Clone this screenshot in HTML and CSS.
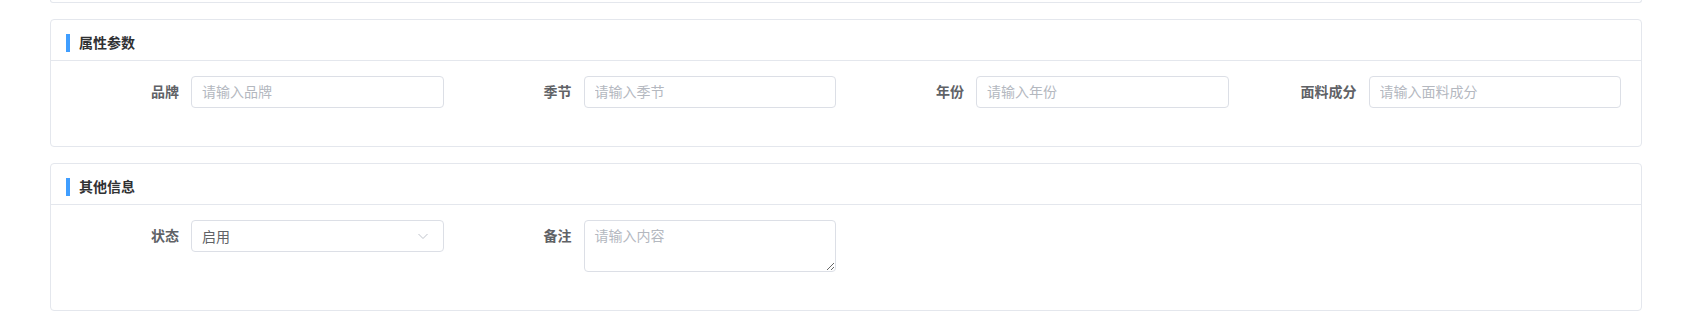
FILE: index.html
```html
<!DOCTYPE html>
<html>
<head>
<meta charset="utf-8">
<title>goods-edit</title>
<link rel="stylesheet" href="styles.css">
</head>
<body>
  <div class="page">
    <div class="card card-prev"></div>

    <div class="card">
      <div class="card-header"><span class="card-title">属性参数</span></div>
      <div class="card-body">
        <div class="form-row">
          <div class="form-item">
            <label class="form-label">品牌</label>
            <input class="form-input" type="text" placeholder="请输入品牌">
          </div>
          <div class="form-item">
            <label class="form-label">季节</label>
            <input class="form-input" type="text" placeholder="请输入季节">
          </div>
          <div class="form-item">
            <label class="form-label">年份</label>
            <input class="form-input" type="text" placeholder="请输入年份">
          </div>
          <div class="form-item">
            <label class="form-label">面料成分</label>
            <input class="form-input" type="text" placeholder="请输入面料成分">
          </div>
        </div>
      </div>
    </div>

    <div class="card">
      <div class="card-header"><span class="card-title">其他信息</span></div>
      <div class="card-body">
        <div class="form-row">
          <div class="form-item">
            <label class="form-label">状态</label>
            <div class="form-select">
              <input class="form-input" type="text" value="启用" readonly>
              <svg class="select-arrow" width="12" height="12" viewBox="0 0 12 12"><path d="M1.5 4l4.5 4.5 4.5-4.5" fill="none" stroke="#c0c4cc" stroke-width="1"/></svg>
            </div>
          </div>
          <div class="form-item">
            <label class="form-label">备注</label>
            <textarea class="form-textarea" placeholder="请输入内容"></textarea>
          </div>
        </div>
      </div>
    </div>
  </div>
</body>
</html>
```

FILE: styles.css
```css
body { margin: 0; background: #ffffff; font-family: "Liberation Sans", "Noto Sans CJK SC", sans-serif; font-size: 14px; color: #606266; }
.page { padding: 0 42px 0 50px; }

.card { border: 1px solid #e4e7ed; border-radius: 4px; background: #fff; margin-bottom: 16px; }
.card-prev { height: 2px; border-top: none; border-radius: 0 0 4px 4px; }

.card-header { padding: 14px 15px 8px; border-bottom: 1px solid #e4e7ed; height: 18px; }
.card-title { display: block; border-left: 4px solid #409eff; padding-left: 9px; height: 18px; line-height: 19px; font-size: 14px; font-weight: bold; color: #303133; }

.card-body { padding: 15px 20px 16px; }
.form-row { display: grid; grid-template-columns: repeat(4, 1fr); margin: 0 -10px; }
.form-item { display: flex; align-items: flex-start; padding: 0 10px; margin-bottom: 22px; }
.form-label { width: 120px; flex: none; box-sizing: border-box; padding-right: 12px; text-align: right; line-height: 32px; font-weight: bold; color: #606266; }

.form-input { flex: 1; min-width: 0; width: 100%; box-sizing: border-box; height: 32px; padding: 0 10px; border: 1px solid #dcdfe6; border-radius: 4px; font-family: inherit; font-size: 14px; color: #606266; outline: none; }
.form-input::placeholder, .form-textarea::placeholder { color: #b4b8bf; }

.form-select { flex: 1; min-width: 0; position: relative; display: flex; }
.form-select .form-input { cursor: pointer; }
.select-arrow { position: absolute; right: 15px; top: 10px; }

.form-textarea { flex: 1; min-width: 0; box-sizing: border-box; height: 52px; padding: 5px 10px; border: 1px solid #dcdfe6; border-radius: 4px; font-family: inherit; font-size: 14px; line-height: 1.5; color: #606266; outline: none; resize: vertical; }
```
